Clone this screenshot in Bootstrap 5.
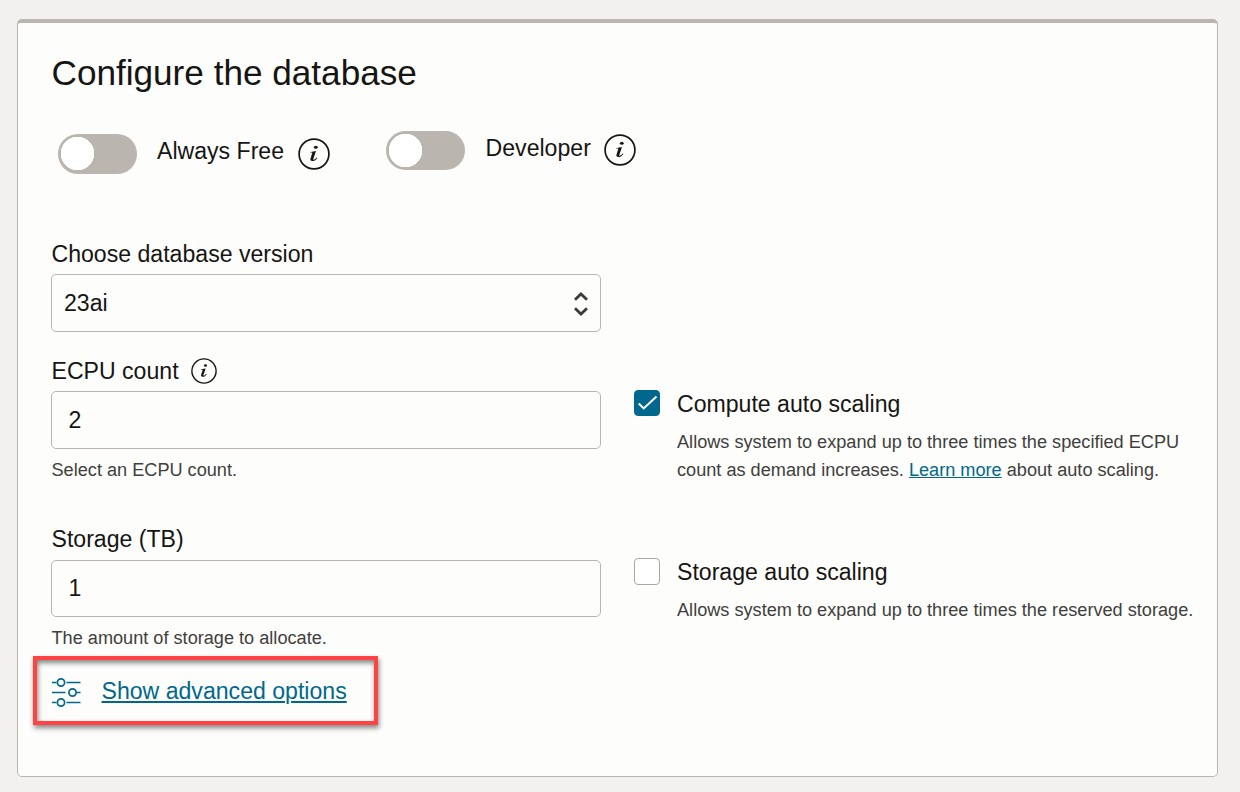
<!DOCTYPE html>
<html lang="en">
<head>
<meta charset="utf-8">
<meta name="viewport" content="width=device-width, initial-scale=1">
<title>Configure the database</title>
<link href="https://cdn.jsdelivr.net/npm/bootstrap@5.3.0/dist/css/bootstrap.min.css" rel="stylesheet">
<style>
:root{--edge:#bbb5b0;--teal:#00688c;--ink:#161513}
body{background:#f3f1f0;color:var(--ink);font:23.1px/28px "Liberation Sans",Arial,sans-serif;padding:19px 22px 0 17px;height:792px;overflow:hidden}
.panel{height:758px;background:#fdfdfb;border:1px solid var(--edge);border-top-width:4px;border-radius:5px;padding:29px 0 0 33px;color:var(--ink)}
.panel h1{font-size:35.15px;line-height:42px;font-weight:400;padding-left:.5px}
.toggles{margin-top:37px;padding-left:7px;height:43px}
.panel .form-switch .form-check-input{width:79px;height:40px;margin:0;border:0;border-radius:20px;background:radial-gradient(circle 17px at 19.5px 19.5px,#fff 16.5px,transparent 17px) var(--edge)}
.toggles .caption{margin:-6px 13.5px 0 20px}
.toggles svg{margin-top:-1px}
.dev{margin-left:56.5px}
.dev .caption{padding-left:.5px}
.panel .dev .form-switch .form-check-input{height:39px}
.main-grid{margin-top:66px;display:grid;grid-template-columns:550px 560px;column-gap:33px;grid-template-rows:117px 168px 124px}
.field-title{padding-left:.5px}
.panel .form-control{height:58px;margin-top:6px;padding:0 16px 0 16.5px;border:1px solid var(--edge);border-radius:5px;background:#fdfdfb;font-size:23.1px;color:var(--ink)}
.panel .picker{padding:0 12px}
.panel #storage{height:57px;margin-top:7px}
.hint{font-size:18.15px;line-height:28px;color:#403f3d}
.below{margin-top:7px;padding-left:.5px}
.beside{margin-top:10px}
.info-sm{margin-left:12.5px}
.panel .box{flex:none;width:26px;height:26px;margin:0;border:1px solid #aaa6a2;border-radius:4px;background-color:#fff}
.panel #grow{height:27px}
.panel .box:checked{border-color:var(--teal);background:var(--teal) url("data:image/svg+xml,%3Csvg xmlns='http://www.w3.org/2000/svg' viewBox='0 0 26 26'%3E%3Cpath d='M4.700 13.400l5 5L22.500 6.600' fill='none' stroke='white' stroke-width='2.1'/%3E%3C/svg%3E") center/26px no-repeat}
.scaling{padding-top:33px;gap:17px}
a,.panel a{color:var(--teal)}
.highlight{margin:7px 0 0 -18px;width:345px;height:69px;border:4px solid #ff4343;box-shadow:1px 3px 5px rgba(0,0,0,.48),inset 1px 3px 5px rgba(0,0,0,.48);padding:0 0 0 14px;gap:20.5px}
.highlight svg{margin-top:2px}
.highlight a{text-decoration-thickness:2px;text-underline-offset:2px}
svg{display:block;flex:none}
</style>
</head>
<body>
<svg width="0" height="0" class="position-absolute" aria-hidden="true">
  <symbol id="info" viewBox="0 0 32 32">
    <circle cx="16" cy="16" r="14.900" fill="none" stroke="#161513" stroke-width="1.700"/>
    <ellipse cx="17.800" cy="9.200" rx="1.900" ry="1.500" fill="#161513"/>
    <path d="M12.600 13.900l5.400-.9-2.700 7.900c-.3 1 .3 1.100 1 .7.900-.5 1.600-1.200 2.400-2.200l.7.500c-1.400 2-3 3.200-4.900 3.200-2 0-2.500-1.100-1.900-2.800l1.600-5c.2-.6 0-.7-.5-.7l-1.200.1z" fill="#161513"/>
  </symbol>
</svg>
<main class="card panel">
  <h1 class="mb-0">Configure the database</h1>
  <div class="toggles d-flex align-items-end">
    <div class="d-flex align-items-center">
      <div class="form-switch p-0 d-flex"><input class="form-check-input" type="checkbox" role="switch" id="free"></div>
      <label class="caption" for="free">Always Free</label>
      <svg width="32" height="32"><use href="#info"/></svg>
    </div>
    <div class="dev d-flex align-items-center align-self-start">
      <div class="form-switch p-0 d-flex"><input class="form-check-input" type="checkbox" role="switch" id="dev"></div>
      <label class="caption" for="dev">Developer</label>
      <svg width="32" height="32"><use href="#info"/></svg>
    </div>
  </div>
  <div class="main-grid">
    <div>
      <div class="field-title">Choose database version</div>
      <div class="form-control picker d-flex align-items-center justify-content-between"><span>23ai</span>
        <svg width="14" height="28" viewBox="0 0 14 28" fill="none" stroke="#3c3a38" stroke-width="2.800"><path d="M1 10.700L7 5l6 5.700M1 19.300L7 25l6-5.700"/></svg>
      </div>
    </div>
    <div></div>
    <div>
      <div class="field-title d-flex align-items-center"><label for="ecpu">ECPU count</label><svg class="info-sm" width="26" height="26"><use href="#info"/></svg></div>
      <input class="form-control" id="ecpu" value="2">
      <div class="hint below">Select an ECPU count.</div>
    </div>
    <div class="scaling d-flex align-items-start">
      <input class="form-check-input box" type="checkbox" id="compute" checked>
      <div><label class="d-block" for="compute">Compute auto scaling</label>
        <div class="hint beside">Allows system to expand up to three times the specified ECPU<br>count as demand increases. <a href="#">Learn more</a> about auto scaling.</div></div>
    </div>
    <div>
      <label class="field-title d-block" for="storage">Storage (TB)</label>
      <input class="form-control" id="storage" value="1">
      <div class="hint below">The amount of storage to allocate.</div>
    </div>
    <div class="scaling d-flex align-items-start">
      <input class="form-check-input box" type="checkbox" id="grow">
      <div><label class="d-block" for="grow">Storage auto scaling</label>
        <div class="hint beside">Allows system to expand up to three times the reserved storage.</div></div>
    </div>
  </div>
  <div class="highlight d-flex align-items-center">
    <svg width="30" height="30" viewBox="0 0 30 30" fill="none" stroke="#00688c" stroke-width="1.700"><path d="M1 5.500h4.500M15.500 5.500h14M1 15.500h13.500M25 15.500h4.500M1 25.500h4.500M15.500 25.500h14"/><circle cx="10" cy="5.500" r="3.600"/><circle cx="21.500" cy="15.500" r="3.600"/><circle cx="10" cy="25.500" r="3.600"/></svg>
    <a href="#">Show advanced options</a>
  </div>
</main>
<script src="https://cdn.jsdelivr.net/npm/bootstrap@5.3.0/dist/js/bootstrap.bundle.min.js"></script>
</body>
</html>
